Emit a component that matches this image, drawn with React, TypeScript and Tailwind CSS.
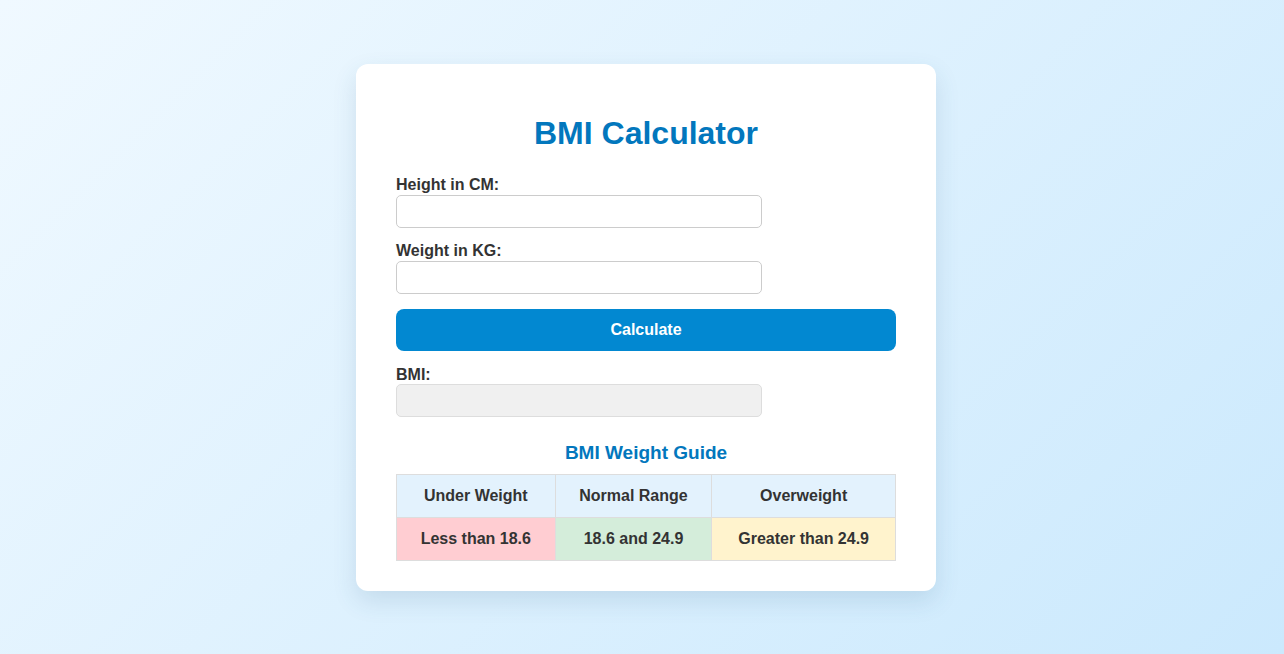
import React, { useState } from "react";

const font = { fontFamily: '"Liberation Sans", Arial, sans-serif' };

const App = () => {
  const [height, setHeight] = useState("");
  const [weight, setWeight] = useState("");
  const [bmi, setBmi] = useState("");

  const calculate = () => {
    const h = parseFloat(height) / 100;
    const w = parseFloat(weight);
    if (h > 0 && w > 0) setBmi((w / (h * h)).toFixed(1));
  };

  return (
    <div
      className="w-screen h-screen flex items-center justify-center pl-[8px] bg-[linear-gradient(135deg,#f0f9ff_0%,#cbe9fd_100%)]"
      style={font}
    >
      <div className="w-[580px] bg-white rounded-[12px] px-[40px] pt-[30px] pb-[30px] shadow-[0_10px_25px_rgba(40,90,130,0.14)]">
        <h1 className="text-[32px] leading-[37px] font-bold text-[#0277bd] text-center mt-[21px] mb-[24px]">
          BMI Calculator
        </h1>

        <label className="block text-[16px] leading-[18px] font-bold text-[#333] mb-[1px]">Height in CM:</label>
        <input
          className="block w-[366px] h-[33px] border border-[#ccc] rounded-[5px] px-2 text-[16px] outline-none"
          value={height}
          onChange={(e) => setHeight(e.target.value)}
        />

        <label className="block text-[16px] leading-[18px] font-bold text-[#333] mt-[14px] mb-[1px]">Weight in KG:</label>
        <input
          className="block w-[366px] h-[33px] border border-[#ccc] rounded-[5px] px-2 text-[16px] outline-none"
          value={weight}
          onChange={(e) => setWeight(e.target.value)}
        />

        <button
          onClick={calculate}
          className="block w-full h-[42px] mt-[15px] bg-[#0288d1] text-white font-bold text-[16px] rounded-[8px]"
        >
          Calculate
        </button>

        <label className="block text-[16px] leading-[18px] font-bold text-[#333] mt-[15px]">BMI:</label>
        <input
          readOnly
          value={bmi}
          className="block w-[366px] h-[33px] border border-[#ddd] bg-[#f0f0f0] rounded-[5px] px-2 text-[16px] outline-none"
        />

        <h3 className="text-[19px] leading-[22px] font-bold text-[#0277bd] text-center mt-[25px] mb-[10px]">
          BMI Weight Guide
        </h3>

        <table className="w-full border-collapse text-[16px] leading-[18px] font-bold text-[#333] text-center">
          <thead>
            <tr className="bg-[#e3f2fd]">
              <th className="w-[159px] border border-[#ddd] py-3">Under Weight</th>
              <th className="w-[157px] border border-[#ddd] py-3">Normal Range</th>
              <th className="w-[184px] border border-[#ddd] py-3">Overweight</th>
            </tr>
          </thead>
          <tbody>
            <tr>
              <td className="border border-[#ddd] py-3 bg-[#ffcdd2]">Less than 18.6</td>
              <td className="border border-[#ddd] py-3 bg-[#d4edda]">18.6 and 24.9</td>
              <td className="border border-[#ddd] py-3 bg-[#fff3cd]">Greater than 24.9</td>
            </tr>
          </tbody>
        </table>
      </div>
    </div>
  );
};

export default App;
